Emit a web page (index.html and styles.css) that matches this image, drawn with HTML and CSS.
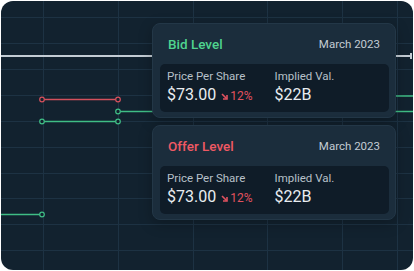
FILE: index.html
```html
<!DOCTYPE html>
<html lang="en">
<head>
    <meta charset="UTF-8">
    <meta name="viewport" content="width=device-width, initial-scale=1.0">
    <title>Bid / Offer Levels</title>
    <link rel="stylesheet" href="styles.css">
</head>
<body>
    <div class="frame">
        <!-- chart canvas: grid and price levels -->
        <svg class="chart" width="412" height="269" viewBox="0 0 412 269">
            <g class="grid">
                <line x1="0" y1="16.5" x2="412" y2="16.5"/>
                <line x1="0" y1="42.5" x2="412" y2="42.5"/>
                <line x1="0" y1="68.5" x2="412" y2="68.5"/>
                <line x1="0" y1="94.5" x2="412" y2="94.5"/>
                <line x1="0" y1="120.5" x2="412" y2="120.5"/>
                <line x1="0" y1="146.5" x2="412" y2="146.5"/>
                <line x1="0" y1="172.5" x2="412" y2="172.5"/>
                <line x1="0" y1="197.5" x2="412" y2="197.5"/>
                <line x1="0" y1="223.5" x2="412" y2="223.5"/>
                <line x1="0" y1="249.5" x2="412" y2="249.5"/>
                <line x1="42.5" y1="0" x2="42.5" y2="269"/>
                <line x1="117.5" y1="0" x2="117.5" y2="269"/>
                <line x1="192.5" y1="0" x2="192.5" y2="269"/>
                <line x1="266.5" y1="0" x2="266.5" y2="269"/>
                <line x1="341.5" y1="0" x2="341.5" y2="269"/>
                <line x1="396.5" y1="0" x2="396.5" y2="269"/>
            </g>

            <g class="last">
                <line x1="0" y1="55" x2="410" y2="55"/>
                <line x1="410" y1="52" x2="410" y2="58"/>
            </g>

            <g class="level red">
                <line x1="41" y1="98.5" x2="117" y2="98.5"/>
                <circle cx="41" cy="98.5" r="2.3"/>
                <circle cx="117" cy="98.5" r="2.3"/>
            </g>
            <g class="level green">
                <line x1="117" y1="110.5" x2="412" y2="110.5"/>
                <circle cx="117" cy="110.5" r="2.3"/>
                <line x1="380" y1="95" x2="412" y2="95"/>
                <line x1="41" y1="120.5" x2="117" y2="120.5"/>
                <circle cx="41" cy="120.5" r="2.3"/>
                <circle cx="117" cy="120.5" r="2.3"/>
                <line x1="0" y1="213.5" x2="41" y2="213.5"/>
                <circle cx="41" cy="213.5" r="2.3"/>
            </g>
        </svg>

        <div class="cards">
            <div class="card">
                <div class="card-head">
                    <span class="card-title bid">Bid Level</span>
                    <span class="card-date">March 2023</span>
                </div>
                <div class="card-body">
                    <div class="stat">
                        <div class="stat-label">Price Per Share</div>
                        <div class="stat-value">$73.00
                            <span class="change">
                                <svg width="7" height="7" viewBox="0 0 7 7"><path d="M1 1 L5.5 5.5"/><path d="M6 2 V6 H2"/></svg>12%
                            </span>
                        </div>
                    </div>
                    <div class="stat">
                        <div class="stat-label">Implied Val.</div>
                        <div class="stat-value">$22B</div>
                    </div>
                </div>
            </div>

            <div class="card">
                <div class="card-head">
                    <span class="card-title offer">Offer Level</span>
                    <span class="card-date">March 2023</span>
                </div>
                <div class="card-body">
                    <div class="stat">
                        <div class="stat-label">Price Per Share</div>
                        <div class="stat-value">$73.00
                            <span class="change">
                                <svg width="7" height="7" viewBox="0 0 7 7"><path d="M1 1 L5.5 5.5"/><path d="M6 2 V6 H2"/></svg>12%
                            </span>
                        </div>
                    </div>
                    <div class="stat">
                        <div class="stat-label">Implied Val.</div>
                        <div class="stat-value">$22B</div>
                    </div>
                </div>
            </div>
        </div>
    </div>
</body>
</html>
```

FILE: styles.css
```css
* {
    margin: 0;
    padding: 0;
    box-sizing: border-box;
    font-family: 'Roboto', 'Liberation Sans', sans-serif;
}

body {
    background: #ffffff;
    padding: 1px;
}

.frame {
    position: relative;
    width: 412px;
    height: 269px;
    background: #12222f;
    border-radius: 12px;
    overflow: hidden;
}

/* Chart */
.chart {
    display: block;
}

.grid line {
    stroke: #1d3243;
    stroke-width: 1;
}

.last line {
    stroke: #c3ccd4;
    stroke-width: 2;
}

.level line {
    stroke-width: 1.5;
}

.level circle {
    fill: #12222f;
    stroke-width: 1.2;
}

.red line, .red circle {
    stroke: #d4505c;
}

.green line, .green circle {
    stroke: #3fbd85;
}

/* Cards over the chart */
.cards {
    position: absolute;
    top: 22px;
    left: 151px;
    width: 244px;
    display: flex;
    flex-direction: column;
    gap: 7px;
}

.card {
    background: #1b2d3c;
    border: 1px solid #233747;
    border-radius: 8px;
    padding: 0 6px 5px 7px;
    box-shadow: 0 4px 14px rgba(0,0,0,0.25);
}

.card-head {
    height: 40px;
    display: flex;
    align-items: center;
    justify-content: space-between;
    padding: 0 9px 0 8px;
}

.card-title {
    font-size: 13.5px;
    font-weight: 500;
}

.card-title.bid {
    color: #4fd48f;
}

.card-title.offer {
    color: #ef5964;
}

.card-date {
    font-size: 11.5px;
    color: #c3cbd3;
}

.card-body {
    display: flex;
    height: 48px;
    background: #0f1c28;
    border-radius: 5px;
    padding: 6px 7px 0;
}

.stat {
    width: 111px;
}

.stat-label {
    font-size: 11.5px;
    line-height: 13px;
    color: #b7c0c9;
}

.stat-value {
    margin-top: 2px;
    font-size: 16px;
    line-height: 19px;
    color: #e9edf1;
    display: flex;
    align-items: baseline;
    gap: 5px;
}

.change {
    font-size: 12px;
    color: #e1525f;
    display: inline-flex;
    align-items: center;
    gap: 2px;
}

.change svg {
    fill: none;
    stroke: #e1525f;
    stroke-width: 1.6;
}
```
